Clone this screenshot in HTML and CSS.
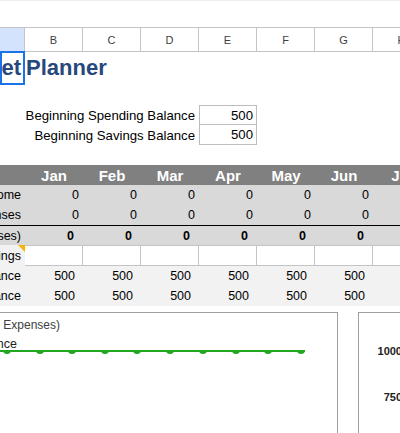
FILE: index.html
```html
<!DOCTYPE html>
<html>
<head>
<meta charset="utf-8">
<link rel="stylesheet" href="styles.css">
</head>
<body>
<div class="topbar"></div>

<div class="row colhdr">
  <div class="ch sel"></div>
  <div class="ch">B</div>
  <div class="ch">C</div>
  <div class="ch">D</div>
  <div class="ch">E</div>
  <div class="ch">F</div>
  <div class="ch">G</div>
  <div class="ch">H</div>
</div>

<div class="row title-row">
  <div class="title-a">Budget</div>
  <div class="title-b">Planner</div>
</div>

<div class="spacer"></div>

<div class="row brow">
  <div class="blabel">Beginning Spending Balance</div>
  <div class="bval first">500</div>
</div>
<div class="row brow">
  <div class="blabel">Beginning Savings Balance</div>
  <div class="bval">500</div>
</div>

<div class="spacer"></div>

<div class="row mrow">
  <div></div>
  <div class="mcell">Jan</div>
  <div class="mcell">Feb</div>
  <div class="mcell">Mar</div>
  <div class="mcell">Apr</div>
  <div class="mcell">May</div>
  <div class="mcell">Jun</div>
  <div class="mcell">Jul</div>
</div>

<div class="row drow">
  <div class="lbl">Income</div>
  <div class="num">0</div><div class="num">0</div><div class="num">0</div>
  <div class="num">0</div><div class="num">0</div><div class="num">0</div>
  <div class="num"></div>
</div>
<div class="row drow sep">
  <div class="lbl">Expenses</div>
  <div class="num">0</div><div class="num">0</div><div class="num">0</div>
  <div class="num">0</div><div class="num">0</div><div class="num">0</div>
  <div class="num"></div>
</div>
<div class="row trow">
  <div class="lbl">Net (Income - Expenses)</div>
  <div class="tnum">0</div><div class="tnum">0</div><div class="tnum">0</div>
  <div class="tnum">0</div><div class="tnum">0</div><div class="tnum">0</div>
  <div class="tnum"></div>
</div>
<div class="row irow">
  <div class="lbl note">Transfer to Savings</div>
  <div class="icell"></div><div class="icell"></div><div class="icell"></div>
  <div class="icell"></div><div class="icell"></div><div class="icell"></div>
  <div class="icell"></div>
</div>
<div class="row srow">
  <div class="lbl">Spending Balance</div>
  <div class="snum">500</div><div class="snum">500</div><div class="snum">500</div>
  <div class="snum">500</div><div class="snum">500</div><div class="snum">500</div>
  <div class="snum"></div>
</div>
<div class="row srow">
  <div class="lbl">Savings Balance</div>
  <div class="snum">500</div><div class="snum">500</div><div class="snum">500</div>
  <div class="snum">500</div><div class="snum">500</div><div class="snum">500</div>
  <div class="snum"></div>
</div>

<div class="charts">
  <div class="chart1">
    <svg class="plot" width="337" height="120" viewBox="0 0 337 120">
      <defs>
        <clipPath id="below"><rect x="0" y="37" width="337" height="83"/></clipPath>
      </defs>
      <text class="ctitle" x="60" y="16" text-anchor="end">Net Savings (Income - Expenses)</text>
      <text class="legend" x="17" y="35" text-anchor="end">Balance</text>
      <line x1="0" y1="38" x2="305" y2="38" stroke="#22a722" stroke-width="2"/>
      <g fill="#22a722" clip-path="url(#below)">
        <circle cx="7" cy="37" r="4"/>
        <circle cx="40" cy="37" r="4"/>
        <circle cx="72" cy="37" r="4"/>
        <circle cx="105" cy="37" r="4"/>
        <circle cx="137" cy="37" r="4"/>
        <circle cx="170" cy="37" r="4"/>
        <circle cx="203" cy="37" r="4"/>
        <circle cx="236" cy="37" r="4"/>
        <circle cx="268" cy="37" r="4"/>
        <circle cx="301" cy="37" r="4"/>
      </g>
    </svg>
  </div>
  <div class="chart2">
    <div class="axis">
      <span>1000</span>
      <span>750</span>
    </div>
  </div>
</div>
</body>
</html>
```

FILE: styles.css
```css
html, body {
  margin: 0;
  padding: 0;
  overflow: hidden;
  background: #ffffff;
}

body {
  width: 400px;
  height: 433px;
  font-family: "Liberation Sans", Arial, sans-serif;
  color: #000000;
}

.topbar {
  height: 27px;
  box-sizing: border-box;
  border-top: 1px solid #eeeeee;
}

.row {
  display: grid;
  grid-template-columns: 25px repeat(7, 58px);
}

.colhdr {
  height: 23px;
  border-top: 1px solid #c4c4c4;
  border-bottom: 1px solid #c4c4c4;
}

.ch {
  display: flex;
  align-items: center;
  justify-content: center;
  box-sizing: border-box;
  border-right: 1px solid #c4c4c4;
  font-size: 11px;
  color: #3c4043;
}

.ch.sel {
  background: #d3e3fd;
}

.title-row {
  height: 34px;
  margin-top: -1px;
  font-weight: bold;
  font-size: 22px;
  color: #27487c;
}

.title-a {
  display: flex;
  justify-content: flex-end;
  align-items: center;
  white-space: nowrap;
  padding-right: 4px;
  box-shadow: inset 0 0 0 2px #1a73e8;
}

.title-b {
  grid-column: 2 / -1;
  display: flex;
  align-items: center;
  white-space: nowrap;
  padding-left: 1px;
}

.spacer {
  height: 20px;
}

.brow {
  height: 20px;
  font-size: 13.2px;
}

.blabel {
  grid-column: 1 / 5;
  display: flex;
  justify-content: flex-end;
  align-items: center;
  white-space: nowrap;
  padding-right: 4px;
}

.bval {
  display: flex;
  justify-content: flex-end;
  align-items: center;
  box-sizing: border-box;
  padding-right: 3px;
  border-left: 1px solid #bdbdbd;
  border-right: 1px solid #bdbdbd;
  border-bottom: 1px solid #bdbdbd;
}

.bval.first {
  border-top: 1px solid #bdbdbd;
}

.mrow {
  height: 20px;
  background: #808080;
  color: #ffffff;
  font-weight: bold;
  font-size: 15px;
}

.mcell {
  display: flex;
  align-items: center;
  justify-content: center;
  white-space: nowrap;
}

.drow, .trow, .irow, .srow {
  font-size: 12.5px;
}

.drow {
  height: 20px;
  background: #d9d9d9;
}

.drow.sep {
  border-bottom: 1px solid #000000;
}

.trow {
  height: 19px;
  background: #d9d9d9;
}

.irow {
  height: 21px;
}

.srow {
  height: 20px;
  background: #f2f2f2;
}

.lbl {
  display: flex;
  justify-content: flex-end;
  align-items: center;
  white-space: nowrap;
  padding-right: 4px;
}

.num, .tnum, .snum {
  display: flex;
  justify-content: flex-end;
  align-items: center;
}

.num {
  padding-right: 4px;
}

.tnum {
  padding-right: 9px;
  font-weight: bold;
}

.snum {
  padding-right: 8px;
}

.irow .lbl {
  background: #f2f2f2;
}

.note {
  position: relative;
}

.note::after {
  content: "";
  position: absolute;
  top: 0;
  right: 0;
  border-style: solid;
  border-width: 0 7px 7px 0;
  border-color: transparent #f4b400 transparent transparent;
}

.icell {
  box-sizing: border-box;
  background: #ffffff;
  border-top: 1px solid #c4c4c4;
  border-bottom: 1px solid #c4c4c4;
  border-right: 1px solid #c4c4c4;
}

.charts {
  display: flex;
  margin-top: 6px;
  height: 121px;
}

.chart1 {
  flex: none;
  width: 338px;
  box-sizing: border-box;
  border-top: 1px solid #a0a0a0;
  border-right: 1px solid #a0a0a0;
}

.plot {
  display: block;
}

.ctitle {
  font-family: "Liberation Sans", Arial, sans-serif;
  font-size: 12px;
  fill: #404040;
}

.legend {
  font-family: "Liberation Sans", Arial, sans-serif;
  font-size: 12.5px;
  fill: #222222;
}

.chart2 {
  flex: none;
  width: 200px;
  margin-left: 20px;
  box-sizing: border-box;
  border-top: 1px solid #a0a0a0;
  border-left: 1px solid #a0a0a0;
}

.axis {
  width: 43px;
  display: flex;
  flex-direction: column;
  align-items: flex-end;
  gap: 32px;
  padding-top: 31px;
  font-weight: bold;
  font-size: 11px;
  line-height: 14px;
  color: #222222;
}
```
